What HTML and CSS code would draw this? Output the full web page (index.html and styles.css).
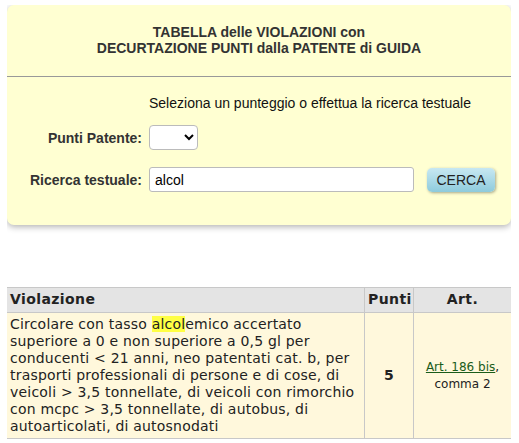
FILE: index.html
```html
<!DOCTYPE html>
<html lang="it">
<head>
    <meta charset="UTF-8">
    <title>Punti Patente</title>
    <link rel="stylesheet" href="styles.css">
</head>
<body>
    <!-- Search Box -->
    <div class="search-box">
        <h2 class="title">TABELLA delle VIOLAZIONI con<br>DECURTAZIONE PUNTI dalla PATENTE di GUIDA</h2>
        <hr>
        <p class="hint">Seleziona un punteggio o effettua la ricerca testuale</p>
        <div class="row">
            <label class="label">Punti Patente:</label>
            <select class="points"><option></option></select>
        </div>
        <div class="row">
            <label class="label">Ricerca testuale:</label>
            <input class="query" type="text" value="alcol">
            <button class="btn">CERCA</button>
        </div>
    </div>

    <!-- Results -->
    <table class="results">
        <thead>
            <tr>
                <th class="col-viol">Violazione</th>
                <th class="col-punti">Punti</th>
                <th class="col-art">Art.</th>
            </tr>
        </thead>
        <tbody>
            <tr>
                <td class="col-viol">Circolare con tasso <mark>alcol</mark>emico accertato superiore a 0 e non superiore a 0,5 gl per conducenti &lt; 21 anni, neo patentati cat. b, per trasporti professionali di persone e di cose, di veicoli &gt; 3,5 tonnellate, di veicoli con rimorchio con mcpc &gt; 3,5 tonnellate, di autobus, di autoarticolati, di autosnodati</td>
                <td class="col-punti"><b>5</b></td>
                <td class="col-art"><a href="#">Art. 186 bis</a>,<br>comma 2</td>
            </tr>
        </tbody>
    </table>
</body>
</html>
```
FILE: styles.css
```css
/* Basic Reset */
* {
    box-sizing: border-box;
}
body {
    margin: 5px 8px 0 7px;
    font-family: "Liberation Sans", Arial, sans-serif;
    background: #fff;
}

/* Search Box */
.search-box {
    background-color: #ffffd2;
    border-radius: 7px;
    box-shadow: 0 2px 6px rgba(0, 0, 0, 0.3);
    padding: 19px 0 33px;
}
.title {
    margin: 0;
    font-size: 14px;
    line-height: 16px;
    text-align: center;
    color: #333;
}
.search-box hr {
    margin: 20px 0 0;
    border: 0;
    border-top: 1px solid #999;
}
.hint {
    margin: 17px 0 0 142px;
    font-size: 14px;
    line-height: 18px;
    color: #111;
}
.row {
    display: flex;
    align-items: center;
    margin-top: 13px;
}
.row + .row {
    margin-top: 17px;
}
.label {
    width: 135px;
    text-align: right;
    font-size: 14px;
    font-weight: bold;
    color: #333;
    margin-right: 7px;
}
.points {
    width: 49px;
    height: 25px;
    border: 1px solid #bbb;
    border-radius: 4px;
    background: #fff;
}
.query {
    width: 265px;
    height: 25px;
    border: 1px solid #bbb;
    border-radius: 3px;
    padding: 2px 5px;
    font-family: "Liberation Sans", Arial, sans-serif;
    font-size: 14px;
    color: #000;
}
.btn {
    margin-left: 13px;
    width: 68px;
    height: 24px;
    border: 0;
    border-radius: 5px;
    background: linear-gradient(#c8e8f2, #8ecbdc);
    box-shadow: 1px 1px 3px rgba(0, 0, 0, 0.35);
    font-family: "Liberation Sans", Arial, sans-serif;
    font-size: 14px;
    color: #222;
}

/* Results Table */
.results {
    margin-top: 62px;
    width: 506px;
    margin-left: -1px;
    border-collapse: collapse;
    table-layout: fixed;
    font-family: "DejaVu Sans", Verdana, sans-serif;
    font-size: 14px;
    line-height: 17px;
    color: #222;
}
.results th,
.results td {
    border: 1px solid #c8c8c8;
    padding: 3px 3px;
}
.results th {
    padding: 3px 3px 4px;
    background-color: #e4e4e4;
    font-weight: bold;
    letter-spacing: 0.4px;
    color: #222;
}
.results td {
    background-color: #fff8dc;
    letter-spacing: 0.2px;
}
.results th.col-viol {
    width: 358px;
    text-align: left;
}
.col-punti {
    width: 49px;
    text-align: center;
}
.col-art {
    text-align: center;
}
td.col-art {
    font-size: 12px;
    line-height: 17px;
    letter-spacing: 0;
}
.col-art a {
    color: #1a5c1a;
}
mark {
    background-color: #ffff44;
    color: #222;
}
```
